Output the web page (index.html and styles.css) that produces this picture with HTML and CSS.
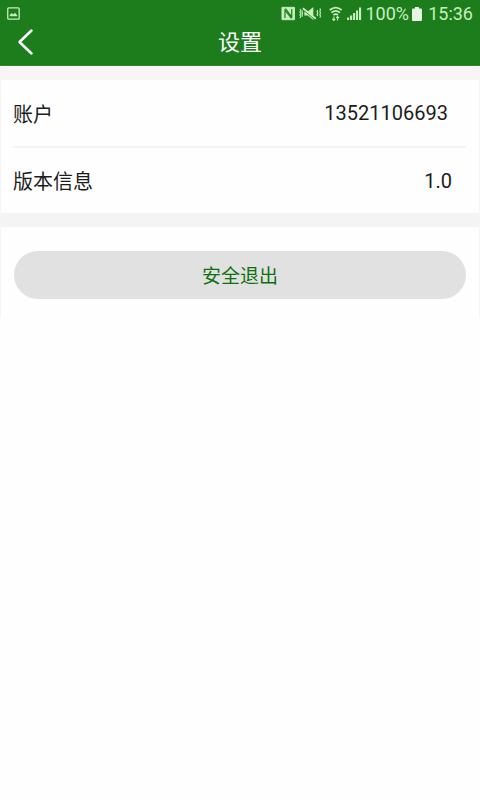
FILE: index.html
```html
<!DOCTYPE html>
<html lang="zh-CN">
<head>
<meta charset="utf-8">
<title>设置</title>
<link rel="stylesheet" href="styles.css">
</head>
<body>
<header class="top">
  <div class="status">
    <svg class="shot" width="13" height="13" viewBox="0 0 13 13"><rect x=".75" y=".75" width="11.5" height="11.5" rx="1" fill="none" stroke="currentColor" stroke-width="1.3"/><path d="M2.8 9.300V8l2-2 1.400 1.400L8 5.700l2.200 2.500v1.100z" fill="currentColor"/></svg>
    <svg class="tray" width="82" height="16" viewBox="0 0 82 16" fill="none" stroke="currentColor">
      <path d="M1 1.300h12.500v12.400H1z" fill="currentColor" stroke-width="1"/>
      <path d="M4 12V4.200l6.500 8.300M10.800 3v7.800L4.500 2.700" stroke="#1d7d1d" stroke-width="1.200"/>
      <path d="M23.500 5.500h3.500l5.500-4.500v13l-5.500-4.500h-3.500z" fill="currentColor" stroke="none"/>
      <path d="M22.500 3.700l12 9.800" stroke="#1d7d1d" stroke-width="1.200"/>
      <path d="M22 2.200l13 10.600" stroke-width="1.700"/>
      <path d="M19 3l1 1.500-1 1.500 1 1.500-1 1.500 1 1.500-1 1.500M21.700 4.500l-.7 1.500.7 1.500-.7 1.500.7 1.500M37 4l-.8 1.500.8 1.500-.8 1.500.8 1.500M39 2.500l.8 1.500-.8 1.500.8 1.500-.8 1.500.8 1.500-.8 1.500" stroke-width="1.100"/>
      <path d="M49 4q6-5 12 0M50.700 6.700q4.300-3.600 8.600 0M52.700 9.200q2.300-2 4.600 0" stroke-width="1.700"/>
      <path d="M53.200 10.500v4m-1.700-1.700l1.700 1.700 1.200-1.300M56.800 14.500v-4m-1.200 1.300l1.200-1.300 1.600 1.500" stroke-width="1.100"/>
      <path d="M67.500 14v-2.500M70.500 14V9.500M73.500 14V7M76.500 14V4.500M79.500 14V1.500" stroke-width="2.100"/>
    </svg>
    <span class="percent">100%</span>
    <svg class="battery" width="10" height="14" viewBox="0 0 10 14"><path d="M3 0h4v1.500h2q1 0 1 1V13q0 1-1 1H1q-1 0-1-1V2.500q0-1 1-1h2z" fill="#e9f6e6"/></svg>
    <span class="time">15:36</span>
  </div>
  <div class="nav">
    <svg class="back" width="18" height="28" viewBox="0 0 18 28"><path d="M14.500 2.500L2.500 14l12 11.500" fill="none" stroke="#fff" stroke-width="2.500" stroke-linecap="round" stroke-linejoin="round"/></svg>
    <h1>设置</h1>
  </div>
</header>
<main>
  <section class="list">
    <div class="row"><span>账户</span><span class="phone">13521106693</span></div>
    <div class="row"><span>版本信息</span><span class="version">1.0</span></div>
  </section>
  <section class="actions"><button>安全退出</button></section>
</main>
</body>
</html>
```
FILE: styles.css
```css
* { box-sizing: border-box; }
body {
  margin: 0;
  background: #fefefe;
  color: #1c1c1c;
  font-family: Roboto, "Noto Sans CJK SC", sans-serif;
}
.top {
  height: 66px;
  background: #1d7d1d;
  border-bottom: 1px solid #2d862d;
}
.status {
  display: flex;
  align-items: center;
  height: 28px;
  padding: 0 7px;
  color: #c5f0bd;
  font-size: 18px;
  line-height: 28px;
}
.shot { margin-top: -1px; }
.tray { margin-left: 261px; }
.percent { width: 44px; margin-left: 3px; }
.battery { margin-left: 3px; }
.time { margin-left: 6px; white-space: nowrap; }
.nav {
  display: grid;
  grid-template-columns: 60px 1fr 60px;
  align-items: center;
  height: 28px;
}
.back { margin-left: 17px; }
h1 {
  margin: 0;
  padding-top: 2px;
  color: #fff;
  font-size: 22px;
  font-weight: 400;
  line-height: 26px;
  text-align: center;
}
main {
  height: 252px;
  border: solid #f5f5f5;
  border-width: 0 1px;
}
.list {
  height: 161px;
  padding: 0 13px 0 12px;
  border: solid #f4f4f4;
  border-width: 14px 0;
  border-top-color: #f8f5f4;
}
.row {
  display: flex;
  align-items: center;
  justify-content: space-between;
  height: 68px;
  font-size: 20px;
}
.row + .row { height: 65px; }
.row:first-child { border-bottom: 2px solid #f3f3f3; }
.phone { margin-right: 18px; }
.version { margin-right: 14px; }
.actions { padding: 24px 13px 0; }
button {
  display: block;
  width: 100%;
  height: 48px;
  padding: 0 0 2px;
  border: 0;
  border-radius: 24px;
  background: #e1e1e1;
  color: #107010;
  font: 19px Roboto, "Noto Sans CJK SC", sans-serif;
}
```
